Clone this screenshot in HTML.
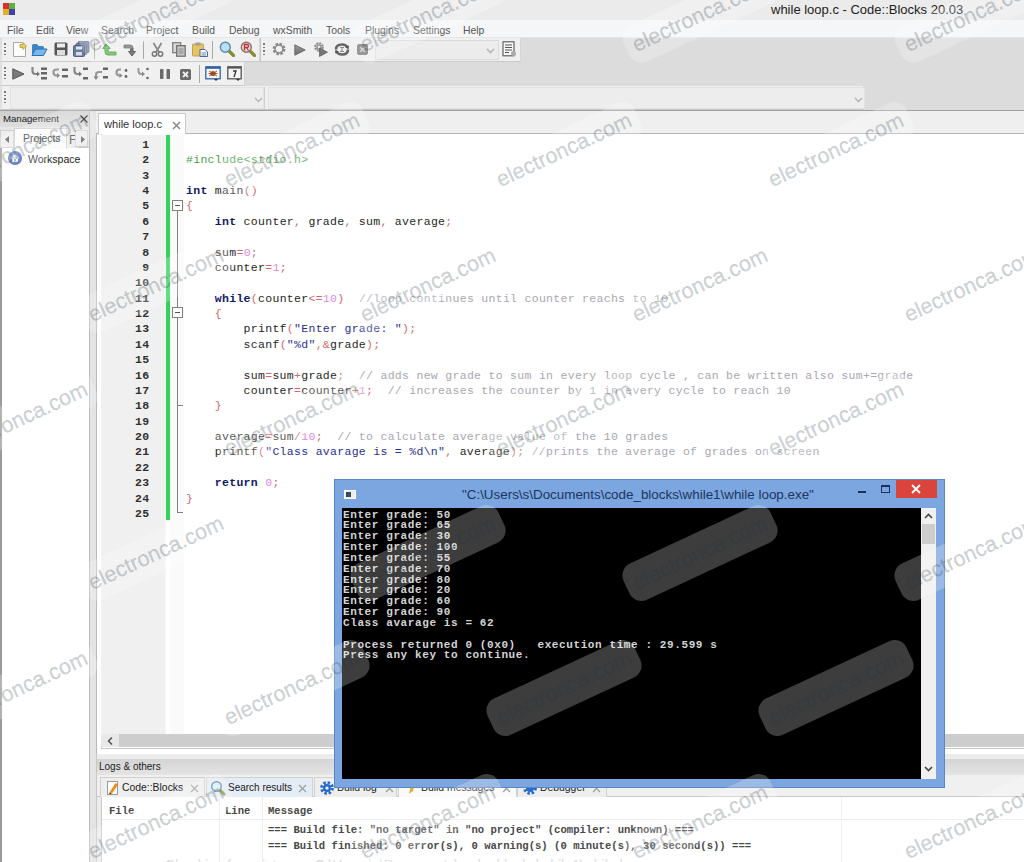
<!DOCTYPE html>
<html><head><meta charset="utf-8">
<style>
*{margin:0;padding:0;box-sizing:border-box}
html,body{width:1024px;height:862px;overflow:hidden;background:#dcdcdc;font-family:"Liberation Sans",sans-serif;position:relative}
div,span,svg{position:absolute}
.t{white-space:pre;line-height:1}
#title{left:0;top:0;width:1024px;height:20px;background:#ebebeb}
#menu{left:0;top:20px;width:1024px;height:18px;background:#f5f6f7;border-bottom:1px solid #e6e6e6}
#menu span{top:6px;font-size:10.4px;color:#555}
.tb{background:#f0f0f0;border-bottom:1px solid #c9c9c9;border-right:1px solid #d6d6d6}
.grip{width:2px;height:14px;top:5px;left:2px;background:repeating-linear-gradient(#7a7a7a 0 1.5px,transparent 1.5px 3.5px)}
.sep{width:1px;height:18px;top:3px;background:#a8a8a8}
.code{font-family:"Liberation Mono",monospace;font-size:11.5px;letter-spacing:0.3px;line-height:15.375px;white-space:pre;color:#262626}
i{font-style:normal}
.ln{color:#303030;font-weight:bold}
.k{color:#10186a;font-weight:bold}
.n{color:#dc88e0}
.o{color:#d06868}
.s{color:#2a3090}
.c{color:#a8a8b0}
.p{color:#48a048}
.wm{width:162px;height:40px;border-radius:13px;background:rgba(255,255,255,0.24);transform:rotate(-25deg)}
.wm span{left:-7px;top:0;width:176px;height:40px;line-height:40px;text-align:center;font-size:21.6px;color:rgba(40,55,65,0.22);white-space:nowrap;-webkit-text-stroke:0.35px rgba(40,55,65,0.22)}
.cn{font-family:"Liberation Mono",monospace;font-size:11px;letter-spacing:0.6px;line-height:10.85px;white-space:pre;color:#d4d4d4;font-weight:bold}
.ltab{top:23px;height:20px;background:#eeeeee;border:1px solid #d0d0d0;border-bottom:none}
.lg{font-family:"Liberation Mono",monospace;font-size:10.6px;line-height:12px;white-space:pre;color:#484848;font-weight:bold}
</style></head><body>
<!-- title bar -->
<div id="title">
  <div style="left:3px;top:3px;width:6px;height:6px;background:#d8302a"></div>
  <div style="left:9px;top:3px;width:6px;height:6px;background:#5fb040"></div>
  <div style="left:3px;top:9px;width:6px;height:6px;background:#e0b020"></div>
  <div style="left:9px;top:9px;width:6px;height:6px;background:#4040b0"></div>
  <span class="t" style="left:771px;top:3px;font-size:13px;color:#222">while loop.c - Code::Blocks 20.03</span>
</div>
<!-- menu -->
<div id="menu">
  <span class="t" style="left:7px">File</span>
  <span class="t" style="left:36px">Edit</span>
  <span class="t" style="left:66px">View</span>
  <span class="t" style="left:101px">Search</span>
  <span class="t" style="left:146px">Project</span>
  <span class="t" style="left:192px">Build</span>
  <span class="t" style="left:229px">Debug</span>
  <span class="t" style="left:273px">wxSmith</span>
  <span class="t" style="left:326px">Tools</span>
  <span class="t" style="left:365px">Plugins</span>
  <span class="t" style="left:413px">Settings</span>
  <span class="t" style="left:463px">Help</span>
</div>
<!-- toolbars -->
<div class="tb" style="left:0;top:38px;width:260px;height:24px;border-left:2px solid #e0e0e0"><div class="grip"></div></div>
<div class="tb" style="left:260px;top:38px;width:261px;height:24px;border-left:1px solid #c8c8c8"><div class="grip"></div>
  <div style="left:114px;top:2px;width:124px;height:20px;background:#ececec;border:1px solid #dadada"><svg style="left:110px;top:7px" width="9" height="6" viewBox="0 0 9 6"><path d="M1 1L4.5 4.5L8 1" stroke="#b0b0b0" stroke-width="1.4" fill="none"/></svg></div>
</div>
<div class="tb" style="left:0;top:62px;width:245px;height:24px;border-left:2px solid #e0e0e0"><div class="grip"></div></div>
<div class="tb" style="left:0;top:86px;width:864px;height:24px;border-left:2px solid #e0e0e0"><div class="grip"></div>
  <div style="left:8px;top:1px;width:254px;height:22px;background:#ededed;border:1px solid #e2e2e2"><svg style="left:243px;top:9px" width="9" height="6" viewBox="0 0 9 6"><path d="M1 1L4.5 4.5L8 1" stroke="#b8b8b8" stroke-width="1.4" fill="none"/></svg></div>
  <div style="left:262px;top:1px;width:1px;height:22px;background:#d0d0d0"></div>
  <div style="left:266px;top:1px;width:597px;height:22px;background:#ededed;border:1px solid #e2e2e2"><svg style="left:585px;top:9px" width="9" height="6" viewBox="0 0 9 6"><path d="M1 1L4.5 4.5L8 1" stroke="#b0b0b0" stroke-width="1.4" fill="none"/></svg></div>
</div>
<!-- toolbar icons row 1 -->
<svg style="left:12px;top:41px" width="16" height="16" viewBox="0 0 16 16"><path d="M1.5 1.5H10L13.5 5V15.5H1.5Z" fill="#fbfbfb" stroke="#a8a8a8"/><path d="M8 3.5H11V1.5L14.5 5L11 8.5V6.5H8Z" fill="#e8d060" stroke="#b09a30" stroke-width="0.8"/></svg>
<svg style="left:31px;top:43px" width="17" height="14" viewBox="0 0 17 14"><path d="M1 2.5Q1 1 2.5 1H6L7.5 3H11.5Q13 3 13 4.5V6H5L1 12Z" fill="#3f86c8"/><path d="M1 12.5L4.5 6H16L12.5 12.5Z" fill="#7ab8ea" stroke="#2a70b8" stroke-width="1"/></svg>
<svg style="left:54px;top:42px" width="14" height="14" viewBox="0 0 14 14"><rect x="0.5" y="0.5" width="13" height="13" rx="1.5" fill="#555"/><rect x="3" y="1.5" width="8" height="4" fill="#eee"/><rect x="3" y="8" width="8" height="5" fill="#ddd"/></svg>
<svg style="left:73px;top:41px" width="17" height="16" viewBox="0 0 17 16"><rect x="5" y="0.5" width="11" height="11" rx="1" fill="#8090b0" stroke="#506080" stroke-width="0.8"/><rect x="2.8" y="2.5" width="11" height="11" rx="1" fill="#7888a8" stroke="#506080" stroke-width="0.8"/><rect x="0.5" y="4.5" width="11" height="11" rx="1" fill="#6a7a9a" stroke="#405070" stroke-width="0.8"/><rect x="3" y="5.5" width="6" height="3" fill="#e0e6f0"/><rect x="3" y="11" width="6" height="3.5" fill="#d8dce4"/></svg>
<div class="sep" style="left:94px;top:41px"></div>
<svg style="left:102px;top:43px" width="15" height="13" viewBox="0 0 15 13"><path d="M4 1L0.8 5.5H3V9Q3 12 6 12H14V9H7Q6.2 9 6.2 8V5.5H8.2Z" fill="#5cbc50" stroke="#3a8a30" stroke-width="0.9"/></svg>
<svg style="left:123px;top:44px" width="14" height="13" viewBox="0 0 14 13"><path d="M1 1H7Q10 1 10 4V7.5H12.5L9 12L5.5 7.5H7.5V4.3Q7.5 4 7 4H1Z" fill="#7a7a7a" stroke="#505050" stroke-width="0.8"/></svg>
<div class="sep" style="left:143px;top:41px"></div>
<svg style="left:151px;top:42px" width="13" height="15" viewBox="0 0 13 15"><path d="M2.5 1L8.5 11M10.5 1L4.5 11" stroke="#8a8a8a" stroke-width="1.8"/><circle cx="3.5" cy="12" r="2.2" fill="none" stroke="#7a7a7a" stroke-width="1.5"/><circle cx="9.5" cy="12" r="2.2" fill="none" stroke="#7a7a7a" stroke-width="1.5"/></svg>
<svg style="left:172px;top:42px" width="14" height="15" viewBox="0 0 14 15"><rect x="0.7" y="0.7" width="8" height="10" fill="#d8d8d8" stroke="#7a7a7a" stroke-width="1.2"/><rect x="4.7" y="3.7" width="8.5" height="10.5" fill="#c8c8c8" stroke="#6a6a6a" stroke-width="1.2"/><path d="M6.5 7H11.5M6.5 9H11.5M6.5 11H11.5" stroke="#777" stroke-width="0.8"/></svg>
<svg style="left:192px;top:42px" width="16" height="15" viewBox="0 0 16 15"><rect x="0.5" y="2" width="11" height="12" rx="1" fill="#e6c460" stroke="#b09040" stroke-width="0.8"/><rect x="3.5" y="0.5" width="5" height="3" fill="#a0a0a0"/><path d="M8 7.5H13L15.5 10V14.5H8Z" fill="#f4f8ff" stroke="#4a6a9a" stroke-width="1"/><path d="M9.5 11H14M9.5 13H14" stroke="#4a6a9a" stroke-width="0.8"/></svg>
<div class="sep" style="left:212px;top:41px"></div>
<svg style="left:219px;top:41px" width="16" height="16" viewBox="0 0 16 16"><path d="M9.5 9.5L14.5 14.5" stroke="#8a8a30" stroke-width="3.2" stroke-linecap="round"/><circle cx="6.3" cy="6.3" r="5" fill="#b8e0f4" stroke="#5a8aa8" stroke-width="1.4"/></svg>
<svg style="left:240px;top:41px" width="16" height="16" viewBox="0 0 16 16"><path d="M9.5 9.5L14.5 14.5" stroke="#8a8a30" stroke-width="3.2" stroke-linecap="round"/><circle cx="6.3" cy="6.3" r="5" fill="#e8d8d8" stroke="#8a7070" stroke-width="1.4"/><path d="M4.5 9.5V3.5H7Q8.5 3.5 8.5 5Q8.5 6.5 7 6.5H5M6.5 6.5L8.5 9.5" stroke="#c03030" stroke-width="1.3" fill="none"/></svg>
<!-- build toolbar -->
<svg style="left:272px;top:42px" width="14" height="14" viewBox="0 0 14 14"><circle cx="7" cy="7" r="4.8" fill="none" stroke="#8a8a8a" stroke-width="3.2" stroke-dasharray="2.3 1.45"/><circle cx="7" cy="7" r="4" fill="none" stroke="#8a8a8a" stroke-width="1.5"/><circle cx="7" cy="7" r="1.8" fill="#f0f0f0"/></svg>
<svg style="left:294px;top:44px" width="12" height="12" viewBox="0 0 12 12"><defs><linearGradient id="pg" x1="0" y1="0" x2="0" y2="1"><stop offset="0" stop-color="#9a9a9a"/><stop offset="1" stop-color="#6a6a6a"/></linearGradient></defs><path d="M0.8 0.8L11.2 6L0.8 11.2Z" fill="url(#pg)" stroke="#666" stroke-width="0.9"/></svg>
<svg style="left:314px;top:42px" width="14" height="15" viewBox="0 0 14 15"><circle cx="5" cy="5" r="3.6" fill="none" stroke="#8a8a8a" stroke-width="2.4" stroke-dasharray="1.9 0.9"/><circle cx="5" cy="5" r="2.6" fill="#9a9a9a"/><circle cx="5" cy="5" r="1.2" fill="#eee"/><path d="M5.5 6L13.5 10.2L5.5 14.5Z" fill="#757575" stroke="#5a5a5a" stroke-width="0.7"/></svg>
<svg style="left:334px;top:43px" width="16" height="13" viewBox="0 0 16 13"><path d="M2 6.5Q2 1.5 8 1.5Q12 1.5 13.5 4.5M14 6.5Q14 11.5 8 11.5Q4 11.5 2.5 8.5" stroke="#666" stroke-width="2.6" fill="none"/><path d="M11 4L15 2.5L14.5 6.5Z" fill="#555"/><path d="M5 9L1 10.5L1.5 6.5Z" fill="#555"/><path d="M6 4.5H10M8 4.5V8.5M6 8.5H10" stroke="#888" stroke-width="1"/></svg>
<svg style="left:357px;top:44px" width="11" height="11" viewBox="0 0 11 11"><rect x="0.5" y="0.5" width="10" height="10" rx="1.5" fill="#7a7a7a" stroke="#666" stroke-width="0.8"/><path d="M3.2 3.2L7.8 7.8M7.8 3.2L3.2 7.8" stroke="#c8c8c8" stroke-width="1.6"/></svg>
<svg style="left:502px;top:41px" width="15" height="16" viewBox="0 0 15 16"><rect x="1" y="0.8" width="11" height="14" fill="#f8f8f8" stroke="#555" stroke-width="1.1"/><path d="M3 4H10M3 6.5H10M3 9H10M3 11.5H7" stroke="#555" stroke-width="1"/><circle cx="11.5" cy="12.5" r="2.5" fill="#aaa"/></svg>
<!-- debugger toolbar -->
<svg style="left:12px;top:68px" width="13" height="12" viewBox="0 0 13 12"><path d="M0.8 0.8L12 6L0.8 11.2Z" fill="#7a7a7a" stroke="#555" stroke-width="1"/></svg>
<svg style="left:31px;top:66px" width="17" height="14" viewBox="0 0 17 14"><path d="M1.5 1V5Q1.5 8 4.5 8H7" stroke="#888" stroke-width="2.2" fill="none"/><path d="M6 5.5L9 8L6 10.5Z" fill="#777"/><rect x="10" y="1.5" width="6" height="2.5" fill="#666"/><rect x="10" y="6" width="6" height="2.5" fill="#666"/><rect x="10" y="11" width="6" height="2.5" fill="#666"/></svg>
<svg style="left:52px;top:67px" width="17" height="13" viewBox="0 0 17 13"><path d="M7 2.5H4.5Q1.5 2.5 1.5 5.5Q1.5 8.5 4.5 8.5H6" stroke="#999" stroke-width="2.2" fill="none"/><path d="M5 6L8 8.5L5 11Z" fill="#888"/><rect x="10" y="1.5" width="6" height="2.5" fill="#666"/><rect x="10" y="8" width="6" height="2.5" fill="#666"/></svg>
<svg style="left:73px;top:66px" width="16" height="14" viewBox="0 0 16 14"><path d="M1.5 1V5Q1.5 8 4.5 8H7" stroke="#888" stroke-width="2.2" fill="none"/><path d="M6 5.5L9 8L6 10.5Z" fill="#777"/><rect x="10" y="1.5" width="5" height="2.5" fill="#666"/><rect x="10" y="11" width="5" height="2.5" fill="#666"/></svg>
<svg style="left:94px;top:66px" width="15" height="15" viewBox="0 0 15 15"><path d="M8 6H5Q2 6 2 9V12" stroke="#999" stroke-width="2.2" fill="none"/><path d="M-0.5 10.5L2 14L4.5 10.5Z" fill="#888"/><rect x="9" y="1.5" width="5" height="2.5" fill="#666"/><rect x="9" y="10" width="5" height="2.5" fill="#666"/></svg>
<svg style="left:115px;top:67px" width="14" height="13" viewBox="0 0 14 13"><path d="M6 2.5H4.5Q1.5 2.5 1.5 5.5Q1.5 8.5 4.5 8.5H5.5" stroke="#999" stroke-width="2.2" fill="none"/><path d="M4.5 6L7.5 8.5L4.5 11Z" fill="#888"/><circle cx="11" cy="3.5" r="1.4" fill="#666"/><circle cx="11" cy="9.5" r="1.4" fill="#666"/></svg>
<svg style="left:137px;top:67px" width="13" height="13" viewBox="0 0 13 13"><path d="M1.5 1V4Q1.5 7 4.5 7H6" stroke="#999" stroke-width="2" fill="none"/><path d="M5 4.5L8 7L5 9.5Z" fill="#888"/><circle cx="10.5" cy="2" r="1.3" fill="#666"/><circle cx="10.5" cy="11" r="1.3" fill="#666"/></svg>
<svg style="left:160px;top:69px" width="10" height="10" viewBox="0 0 10 10"><rect x="0" y="0" width="3.5" height="10" rx="0.8" fill="#6a6a6a"/><rect x="6.5" y="0" width="3.5" height="10" rx="0.8" fill="#6a6a6a"/></svg>
<svg style="left:180px;top:69px" width="11" height="11" viewBox="0 0 11 11"><rect x="0" y="0" width="11" height="11" rx="1.5" fill="#6a6a6a"/><path d="M3 3L8 8M8 3L3 8" stroke="#f0f0f0" stroke-width="1.8"/></svg>
<div class="sep" style="left:199px;top:65px"></div>
<svg style="left:205px;top:66px" width="16" height="15" viewBox="0 0 16 15"><rect x="0.8" y="0.8" width="14.4" height="12" fill="#f4f6fa" stroke="#3060a8" stroke-width="1.3"/><rect x="0.8" y="0.8" width="14.4" height="2" fill="#3060a8"/><circle cx="8" cy="7.5" r="2.6" fill="#b05a20"/><path d="M4 5L12 10M12 5L4 10M3.5 7.5H12.5" stroke="#904818" stroke-width="0.9"/><path d="M9 13L11 15L13 13Z" fill="#333"/></svg>
<svg style="left:227px;top:66px" width="15" height="15" viewBox="0 0 15 15"><rect x="0.8" y="0.8" width="13.4" height="12" fill="#f4f4f4" stroke="#555" stroke-width="1.3"/><rect x="0.8" y="0.8" width="13.4" height="1.8" fill="#555"/><path d="M6 5H9L7 11" stroke="#333" stroke-width="1.3" fill="none"/><path d="M9 13L11 15L13 13Z" fill="#333"/></svg>
<div style="left:0;top:110px;width:1024px;height:1px;background:#a0a0a0"></div>

<!-- left panel -->
<div id="mgmt" style="left:0;top:111px;width:90px;height:751px;background:#fff;border-right:1px solid #bbb"><div style="left:0;top:37px;width:2px;height:714px;background:#9a9a9a"></div>
  <div style="left:-2px;top:0;width:91px;height:16px;background:linear-gradient(#cfcfcf,#dedede)">
    <span class="t" style="left:5px;top:3px;font-size:9.6px;color:#222">Management</span>
    <svg style="left:82px;top:4px" width="8" height="8" viewBox="0 0 8 8"><path d="M0.5 0.5L7.5 7.5M7.5 0.5L0.5 7.5" stroke="#222" stroke-width="1.2"/></svg>
  </div>
  <div style="left:-2px;top:16px;width:91px;height:21px;background:#e6e6e6;border-bottom:1px solid #c8c8c8"></div>
  <div style="left:0;top:19px;width:14px;height:18px;background:#ededed;border:1px solid #d0d0d0"><svg style="left:4px;top:5px" width="4" height="7" viewBox="0 0 4 7"><path d="M4 0L0 3.5L4 7Z" fill="#555"/></svg></div>
  <div style="left:14px;top:17px;width:53px;height:21px;background:#fafafa;border:1px solid #d0d0d0;border-bottom:none">
    <span class="t" style="left:8px;top:5px;font-size:10.4px;color:#333">Projects</span>
  </div>
  <div style="left:67px;top:19px;width:12px;height:18px;background:#eaeaea;border-right:1px solid #d0d0d0"><span class="t" style="left:2px;top:4px;font-size:12px;color:#444">F</span></div>
  <div style="left:75px;top:19px;width:13px;height:17px;background:#ededed;border:1px solid #d0d0d0"><svg style="left:5px;top:5px" width="4" height="7" viewBox="0 0 4 7"><path d="M0 0L4 3.5L0 7Z" fill="#555"/></svg></div>
  <svg style="left:7px;top:39px" width="16" height="16" viewBox="0 0 16 16"><defs><radialGradient id="wsg" cx="0.4" cy="0.35" r="0.7"><stop offset="0" stop-color="#8aa8e8"/><stop offset="1" stop-color="#2a48a0"/></radialGradient></defs><circle cx="8" cy="8" r="7" fill="url(#wsg)"/><path d="M4.2 8.2L8 4.6L11.8 8.2M5.5 7.5V11.3H10.5V7.5" fill="#fff" stroke="#fff" stroke-width="1"/><rect x="7.2" y="9" width="1.6" height="2.3" fill="#6a88c8"/></svg>
  <span class="t" style="left:28px;top:43px;font-size:10.5px;color:#222">Workspace</span>
</div>
<div style="left:90px;top:111px;width:7px;height:751px;background:#e3e3e3"></div>

<!-- editor notebook -->
<div id="nb" style="left:96px;top:111px;width:928px;height:644px;background:#efefef">
  <div style="left:0;top:22px;width:928px;height:622px;background:#fff;border-left:1px solid #b8b8b8;border-bottom:1px solid #a8a8a8;border-top:1px solid #b4b4b4"></div>
  <div style="left:2px;top:2px;width:88px;height:22px;background:#fff;border:1px solid #c8c8c8;border-bottom:none">
    <span class="t" style="left:5px;top:5px;font-size:11.1px;color:#333">while loop.c</span>
    <svg style="left:73px;top:7px" width="9" height="9" viewBox="0 0 9 9"><path d="M1 1L8 8M8 1L1 8" stroke="#888" stroke-width="1.5"/></svg>
  </div>
  <div style="left:5px;top:23px;width:923px;height:615px;background:#fff;border-left:1px solid #c8c8c8;border-bottom:1px solid #c8c8c8"></div>
</div>
<div id="editor" style="left:101px;top:135px;width:923px;height:612px;background:#fff;overflow:hidden">
  <div style="left:0;top:0;width:64px;height:612px;background:#f0f0f0"></div>
  <div style="left:64px;top:0;width:1px;height:612px;background:#f6f6f6"></div>
  <div style="left:69px;top:0;width:14px;height:612px;background:#fafafa"></div>
  <div style="left:65px;top:0;width:4px;height:385px;background:#33d35a"></div>
  <div style="left:71px;top:65px;width:11px;height:11px;border:1px solid #808080;background:#fff"><div style="left:2px;top:4px;width:5px;height:1px;background:#555"></div></div>
  <div style="left:76px;top:76px;width:1px;height:301px;background:#808080"></div>
  <div style="left:76px;top:377px;width:6px;height:1px;background:#808080"></div>
  <div style="left:71px;top:172px;width:11px;height:11px;border:1px solid #808080;background:#fff"><div style="left:2px;top:4px;width:5px;height:1px;background:#555"></div></div>
  <div style="left:76px;top:270px;width:6px;height:1px;background:#808080"></div>
  <div style="left:0;top:599px;width:923px;height:13px;background:#e8e8e8">
    <div style="left:18px;top:0;width:905px;height:13px;background:#cdcdcd"></div>
    <svg style="left:6px;top:3px" width="6" height="8" viewBox="0 0 6 8"><path d="M5 0.5L1.5 4L5 7.5" stroke="#505050" stroke-width="1.5" fill="none"/></svg>
  </div>
  <div class="code ln" style="left:0;top:1.9px;width:48.5px;text-align:right">1
2
3
4
5
6
7
8
9
10
11
12
13
14
15
16
17
18
19
20
21
22
23
24
25</div>
  <div class="code" style="left:85px;top:1.9px">
<i class="p">#include&lt;stdio.h&gt;</i>

<i class="k">int</i> main<i class="o">()</i>
<i class="o">{</i>
    <i class="k">int</i> counter<i class="o">,</i> grade<i class="o">,</i> sum<i class="o">,</i> average<i class="o">;</i>

    sum<i class="o">=</i><i class="n">0</i><i class="o">;</i>
    counter<i class="o">=</i><i class="n">1</i><i class="o">;</i>

    <i class="k">while</i><i class="o">(</i>counter<i class="o">&lt;=</i><i class="n">10</i><i class="o">)</i>  <i class="c">//loop continues until counter reachs to 10</i>
    <i class="o">{</i>
        printf<i class="o">(</i><i class="s">"Enter grade: "</i><i class="o">);</i>
        scanf<i class="o">(</i><i class="s">"%d"</i><i class="o">,&amp;</i>grade<i class="o">);</i>

        sum<i class="o">=</i>sum<i class="o">+</i>grade<i class="o">;</i>  <i class="c">// adds new grade to sum in every loop cycle , can be written also sum+=grade</i>
        counter<i class="o">=</i>counter<i class="o">+</i><i class="n">1</i><i class="o">;</i>  <i class="c">// increases the counter by 1 in every cycle to reach 10</i>
    <i class="o">}</i>

    average<i class="o">=</i>sum<i class="o">/</i><i class="n">10</i><i class="o">;</i>  <i class="c">// to calculate average value of the 10 grades</i>
    printf<i class="o">(</i><i class="s">"Class avarage is = %d\n"</i><i class="o">,</i> average<i class="o">);</i> <i class="c">//prints the average of grades on screen</i>

    <i class="k">return</i> <i class="n">0</i><i class="o">;</i>
<i class="o">}</i>

</div>
</div>

<!-- logs panel -->
<div id="logs" style="left:96px;top:754px;width:928px;height:108px;background:#ececec;border-left:1px solid #c8c8c8">
  <div style="left:0;top:5px;width:928px;height:16px;background:linear-gradient(#d4d4d4,#e4e4e4)">
    <span class="t" style="left:2px;top:3px;font-size:10px;color:#222">Logs &amp; others</span>
  </div>
  <div style="left:0;top:21px;width:928px;height:22px;background:#f0f0f0"></div>
  <div style="left:0;top:42px;width:928px;height:1px;background:#c8c8c8"></div>
  <div class="ltab" style="left:3px;width:105px">
    <svg style="left:5px;top:2px" width="14" height="16" viewBox="0 0 14 16"><rect x="1.5" y="1.5" width="10" height="13" fill="#fff" stroke="#9a9a9a"/><path d="M3.5 12.5L9.5 3L12 4.8L6 13.5Z" fill="#f08a1c"/><path d="M3.5 12.5L3 14.5L6 13.5Z" fill="#704010"/></svg>
    <span class="t" style="left:21px;top:5px;font-size:10.4px;color:#222">Code::Blocks</span>
    <svg style="left:89px;top:6px" width="9" height="9" viewBox="0 0 9 9"><path d="M1 1L8 8M8 1L1 8" stroke="#a0a0a0" stroke-width="1.3"/></svg>
  </div>
  <div class="ltab" style="left:109px;width:107px;background:#e4ecf4">
    <svg style="left:3px;top:2px" width="16" height="16" viewBox="0 0 16 16"><path d="M10 10L14 14" stroke="#8a9a30" stroke-width="3" stroke-linecap="round"/><circle cx="6.5" cy="6.5" r="4.8" fill="#d8eef8" stroke="#5a8aa8" stroke-width="1.4"/></svg>
    <span class="t" style="left:21px;top:5px;font-size:10px;color:#222">Search results</span>
    <svg style="left:91px;top:6px" width="9" height="9" viewBox="0 0 9 9"><path d="M1 1L8 8M8 1L1 8" stroke="#a0a0a0" stroke-width="1.3"/></svg>
  </div>
  <div class="ltab" style="left:217px;width:83px">
    <svg style="left:4px;top:2px" width="16" height="16" viewBox="0 0 16 16"><circle cx="8" cy="8" r="5.3" fill="none" stroke="#2a6ad0" stroke-width="3.2" stroke-dasharray="2.4 1.75"/><circle cx="8" cy="8" r="4" fill="#2a6ad0"/><circle cx="8" cy="8" r="1.6" fill="#fff"/></svg>
    <span class="t" style="left:22px;top:5px;font-size:10.4px;color:#222">Build log</span><svg style="left:70px;top:6px" width="9" height="9" viewBox="0 0 9 9"><path d="M1 1L8 8M8 1L1 8" stroke="#a0a0a0" stroke-width="1.3"/></svg>
  </div>
  <div class="ltab" style="left:301px;width:119px;background:#fafafa">
    <svg style="left:8px;top:3px" width="10" height="14" viewBox="0 0 10 14"><path d="M2 13L4 4L8 1L6 10Z" fill="#e0b030"/></svg><span class="t" style="left:22px;top:5px;font-size:10.4px;color:#222">Build messages</span><svg style="left:103px;top:6px" width="9" height="9" viewBox="0 0 9 9"><path d="M1 1L8 8M8 1L1 8" stroke="#a0a0a0" stroke-width="1.3"/></svg>
  </div>
  <div class="ltab" style="left:420px;width:90px">
    <svg style="left:4px;top:2px" width="16" height="16" viewBox="0 0 16 16"><circle cx="8" cy="8" r="5.3" fill="none" stroke="#2a6ad0" stroke-width="3.2" stroke-dasharray="2.4 1.75"/><circle cx="8" cy="8" r="4" fill="#2a6ad0"/></svg>
    <span class="t" style="left:22px;top:5px;font-size:10.4px;color:#222">Debugger</span><svg style="left:74px;top:6px" width="9" height="9" viewBox="0 0 9 9"><path d="M1 1L8 8M8 1L1 8" stroke="#a0a0a0" stroke-width="1.3"/></svg>
  </div>
  <div style="left:4px;top:43px;width:924px;height:65px;background:#fff;border-left:1px solid #c8c8c8">
    <div style="left:0;top:22px;width:924px;height:1px;background:#ececec"></div>
    <div style="left:117px;top:0;width:1px;height:65px;background:#ececec"></div>
    <div style="left:160px;top:0;width:1px;height:65px;background:#ececec"></div>
    <div style="left:739px;top:0;width:1px;height:65px;background:#f0f0f0"></div>
    <div class="lg" style="left:7px;top:8px">File</div>
    <div class="lg" style="left:123px;top:8px">Line</div>
    <div class="lg" style="left:166px;top:8px">Message</div>
    <div class="lg" style="left:166px;top:27px">=== Build file: "no target" in "no project" (compiler: unknown) ===</div>
    <div class="lg" style="left:166px;top:43px">=== Build finished: 0 error(s), 0 warning(s) (0 minute(s), 30 second(s)) ===</div>
    <div class="t" style="left:63px;top:61px;font-size:14px;color:#dcdcdc">Checking for existence: C:\Users\s\Documents\code_blocks\while1\while loop.exe</div>
  </div>
</div>

<!-- console -->
<div id="con" style="left:334px;top:479px;width:611px;height:309px;background:#7ba6df;border:1px solid #5b86bf">
  <div style="left:7px;top:28px;width:579px;height:271px;background:#000">
    <div class="cn" style="left:1px;top:1.5px">Enter grade: 50
Enter grade: 65
Enter grade: 30
Enter grade: 100
Enter grade: 55
Enter grade: 70
Enter grade: 80
Enter grade: 20
Enter grade: 60
Enter grade: 90
Class avarage is = 62

Process returned 0 (0x0)   execution time : 29.599 s
Press any key to continue.</div>
  </div>
  <div style="left:586px;top:28px;width:15px;height:271px;background:#f0f0f0">
    <svg style="left:3px;top:5px" width="9" height="6" viewBox="0 0 9 6"><path d="M1 5L4.5 1.5L8 5" stroke="#444" stroke-width="1.6" fill="none"/></svg>
    <div style="left:1px;top:16px;width:13px;height:20px;background:#cdcdcd"></div>
    <svg style="left:3px;top:258px" width="9" height="6" viewBox="0 0 9 6"><path d="M1 1L4.5 4.5L8 1" stroke="#444" stroke-width="1.6" fill="none"/></svg>
  </div>
  <svg style="left:9px;top:10px" width="12" height="9" viewBox="0 0 12 9"><rect x="0.5" y="0.5" width="11" height="8" fill="#e8eef4" stroke="#fff"/><rect x="2" y="2" width="5" height="5" fill="#3a4a5a"/></svg>
  <span class="t" style="left:127px;top:7.5px;font-size:13.4px;color:#1c355e">"C:\Users\s\Documents\code_blocks\while1\while loop.exe"</span>
  <div style="left:523px;top:11px;width:8px;height:2px;background:#1a3060"></div>
  <div style="left:546px;top:5px;width:9px;height:8px;border:1.5px solid #1a3060;border-top-width:2.5px"></div>
  <div style="left:561px;top:0;width:41px;height:18px;background:#d9453c">
    <svg style="left:15px;top:4px" width="10" height="10" viewBox="0 0 10 10"><path d="M1 1L9 9M9 1L1 9" stroke="#fff" stroke-width="1.8"/></svg>
  </div>
</div>
<!-- watermarks -->
<div class="wm" style="left:75px;top:-5px"><span>electronca.com</span></div>
<div class="wm" style="left:347px;top:-5px"><span>electronca.com</span></div>
<div class="wm" style="left:619px;top:-5px"><span>electronca.com</span></div>
<div class="wm" style="left:891px;top:-5px"><span>electronca.com</span></div>
<div class="wm" style="left:-61px;top:130px"><span>electronca.com</span></div>
<div class="wm" style="left:211px;top:130px"><span>electronca.com</span></div>
<div class="wm" style="left:483px;top:130px"><span>electronca.com</span></div>
<div class="wm" style="left:755px;top:130px"><span>electronca.com</span></div>
<div class="wm" style="left:75px;top:265px"><span>electronca.com</span></div>
<div class="wm" style="left:347px;top:265px"><span>electronca.com</span></div>
<div class="wm" style="left:619px;top:265px"><span>electronca.com</span></div>
<div class="wm" style="left:891px;top:265px"><span>electronca.com</span></div>
<div class="wm" style="left:-61px;top:399px"><span>electronca.com</span></div>
<div class="wm" style="left:211px;top:399px"><span>electronca.com</span></div>
<div class="wm" style="left:483px;top:399px"><span>electronca.com</span></div>
<div class="wm" style="left:755px;top:399px"><span>electronca.com</span></div>
<div class="wm" style="left:75px;top:533px"><span>electronca.com</span></div>
<div class="wm" style="left:347px;top:533px"><span>electronca.com</span></div>
<div class="wm" style="left:619px;top:533px"><span>electronca.com</span></div>
<div class="wm" style="left:891px;top:533px"><span>electronca.com</span></div>
<div class="wm" style="left:-61px;top:668px"><span>electronca.com</span></div>
<div class="wm" style="left:211px;top:668px"><span>electronca.com</span></div>
<div class="wm" style="left:483px;top:668px"><span>electronca.com</span></div>
<div class="wm" style="left:755px;top:668px"><span>electronca.com</span></div>
<div class="wm" style="left:75px;top:802px"><span>electronca.com</span></div>
<div class="wm" style="left:347px;top:802px"><span>electronca.com</span></div>
<div class="wm" style="left:619px;top:802px"><span>electronca.com</span></div>
<div class="wm" style="left:891px;top:802px"><span>electronca.com</span></div>
</body></html>
